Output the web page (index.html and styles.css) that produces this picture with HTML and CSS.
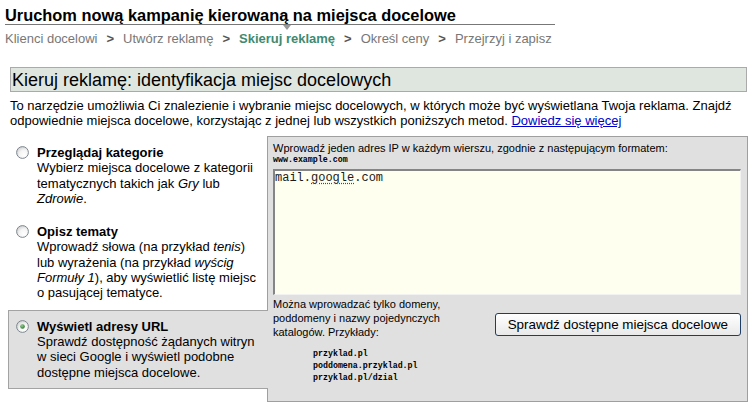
FILE: index.html
```html
<!DOCTYPE html>
<html lang="pl">
<head>
<meta charset="utf-8">
<title>Uruchom nową kampanię kierowaną na miejsca docelowe</title>
<link rel="stylesheet" href="styles.css">
</head>
<body>
<header class="top">
  <h1 class="title">Uruchom nową kampanię kierowaną na miejsca docelowe</h1>
  <nav class="crumbs"><span class="crumb">Klienci docelowi</span><span class="sep">&gt;</span><span class="crumb">Utwórz reklamę</span><span class="sep">&gt;</span><span class="crumb crumb-current">Skieruj reklamę</span><span class="sep">&gt;</span><span class="crumb">Określ ceny</span><span class="sep">&gt;</span><span class="crumb">Przejrzyj i zapisz</span></nav>
</header>
<main class="content">
  <h2 class="section-head">Kieruj reklamę: identyfikacja miejsc docelowych</h2>
  <p class="intro">To narzędzie umożliwia Ci znalezienie i wybranie miejsc docelowych, w których może być wyświetlana Twoja reklama. Znajdź odpowiednie miejsca docelowe, korzystając z jednej lub wszystkich poniższych metod. <a class="link" href="#">Dowiedz się więcej</a></p>
  <div class="picker">
    <div class="options">
      <div class="option">
        <svg class="radio" width="13" height="13" viewBox="0 0 13 13">
          <defs>
            <radialGradient id="rfill" cx="0.65" cy="0.7" r="0.75">
              <stop offset="0" stop-color="#ffffff"/>
              <stop offset="0.55" stop-color="#f4f4f4"/>
              <stop offset="1" stop-color="#cfcfcf"/>
            </radialGradient>
            <radialGradient id="rdot" cx="0.4" cy="0.35" r="0.7">
              <stop offset="0" stop-color="#8fd08f"/>
              <stop offset="1" stop-color="#2b6f2b"/>
            </radialGradient>
          </defs>
          <circle cx="6.5" cy="6.5" r="5.9" fill="url(#rfill)" stroke="#7d8790" stroke-width="1"/>
        </svg>
        <div class="opt-text">
          <div class="opt-title">Przeglądaj kategorie</div>
          <div class="opt-desc">Wybierz miejsca docelowe z kategorii tematycznych takich jak <em>Gry</em> lub <em>Zdrowie</em>.</div>
        </div>
      </div>
      <div class="option">
        <svg class="radio" width="13" height="13" viewBox="0 0 13 13">
          <circle cx="6.5" cy="6.5" r="5.9" fill="url(#rfill)" stroke="#7d8790" stroke-width="1"/>
        </svg>
        <div class="opt-text">
          <div class="opt-title">Opisz tematy</div>
          <div class="opt-desc">Wprowadź słowa (na przykład <em>tenis</em>) lub wyrażenia (na przykład <em>wyścig Formuły 1</em>), aby wyświetlić listę miejsc o pasującej tematyce.</div>
        </div>
      </div>
      <div class="option option-selected">
        <svg class="radio" width="13" height="13" viewBox="0 0 13 13">
          <circle cx="6.5" cy="6.5" r="5.9" fill="url(#rfill)" stroke="#7d8790" stroke-width="1"/>
          <circle cx="6.5" cy="6.5" r="2.3" fill="url(#rdot)"/>
        </svg>
        <div class="opt-text">
          <div class="opt-title">Wyświetl adresy URL</div>
          <div class="opt-desc">Sprawdź dostępność żądanych witryn w sieci Google i wyświetl podobne dostępne miejsca docelowe.</div>
        </div>
      </div>
    </div>
    <section class="panel">
      <div class="panel-label">Wprowadź jeden adres IP w każdym wierszu, zgodnie z następującym formatem:</div>
      <div class="format">www.example.com</div>
      <div class="field">mail.<span class="spell">google</span>.com</div>
      <div class="panel-bottom">
        <div class="hint">
          <div class="hint-text">Można wprowadzać tylko domeny, poddomeny i nazwy pojedynczych katalogów. Przykłady:</div>
          <div class="examples">
            <div>przyklad.pl</div>
            <div>poddomena.przyklad.pl</div>
            <div>przyklad.pl/dzial</div>
          </div>
        </div>
        <button class="check-btn" type="button">Sprawdź dostępne miejsca docelowe</button>
      </div>
    </section>
  </div>
</main>
</body>
</html>
```

FILE: styles.css
```css
* {
  box-sizing: border-box;
}

body {
  margin: 0;
  background: #ffffff;
  color: #000000;
  font-family: "Liberation Sans", Arial, sans-serif;
  font-size: 13px;
  line-height: 15.3px;
}

.top {
  padding-left: 5px;
}

.title {
  width: 550px;
  margin: 0;
  padding-top: 6px;
  font-size: 16.4px;
  line-height: 18px;
  font-weight: bold;
  border-bottom: 1px solid #777777;
}

.crumbs {
  margin-top: 6px;
  line-height: 15px;
  color: #777777;
  white-space: nowrap;
}

.sep {
  margin: 0 9px;
  color: #555555;
  font-weight: bold;
}

.crumb-current {
  position: relative;
  color: #3f8a70;
  font-weight: bold;
}

.crumb-current::before {
  content: "";
  position: absolute;
  left: 50%;
  top: -6px;
  margin-left: -4px;
  border-left: 4px solid transparent;
  border-right: 4px solid transparent;
  border-top: 5px solid #9a9a9a;
}

.content {
  padding: 0 6px 0 8px;
}

.section-head {
  margin: 21px 1px 0 2px;
  height: 25px;
  padding: 1px 0 0 1px;
  border: 1px solid #aaaaaa;
  background: #dfe6df;
  font-size: 18px;
  line-height: 22px;
  font-weight: normal;
}

.intro {
  margin: 6px 0 0 2px;
  line-height: 15px;
}

.link {
  color: #0000cc;
  text-decoration: underline;
}

.picker {
  display: flex;
  margin-top: 8px;
}

.options {
  flex: none;
  width: 259px;
}

.option {
  display: flex;
  align-items: flex-start;
  padding: 8px 4px 8px 7px;
  border: 1px solid transparent;
  border-right: 0;
}

.option-selected {
  position: relative;
  z-index: 1;
  margin-right: -1px;
  background: #e0e0e0;
  border-color: #a3a3a3;
}

.radio {
  flex: none;
  margin: 1px 8px 0 0;
}

.opt-text {
  flex: 1;
}

.opt-title {
  font-weight: bold;
}

.panel {
  flex: 1;
  background: #e0e0e0;
  border: 1px solid #9f9f9f;
  padding: 5px 6px 17px 5px;
  font-size: 11px;
  line-height: 13px;
}

.format {
  font-family: "Liberation Mono", "Courier New", monospace;
  font-size: 8.3px;
  line-height: 10px;
  font-weight: bold;
}

.field {
  margin-top: 4px;
  height: 126px;
  padding: 0;
  background: #fffff0;
  border-top: 2px solid #858585;
  border-left: 2px solid #858585;
  border-right: 1px solid #f2f2f2;
  border-bottom: 1px solid #f2f2f2;
  font-family: "Liberation Mono", "Courier New", monospace;
  font-size: 12px;
  line-height: 14px;
  color: #1a1a1a;
}

.spell {
  text-decoration-line: underline;
  text-decoration-style: dotted;
  text-decoration-color: #d01010;
  text-underline-offset: 2px;
}

.panel-bottom {
  display: flex;
  align-items: flex-start;
  margin-top: 2px;
}

.hint {
  width: 190px;
  flex: none;
}

.hint-text {
  line-height: 14px;
}

.examples {
  margin: 9px 0 0 40px;
  font-family: "Liberation Mono", "Courier New", monospace;
  font-size: 8.3px;
  line-height: 12px;
  font-weight: bold;
}

.check-btn {
  margin: 16px 0 0 auto;
  height: 23px;
  padding: 0 12px;
  border: 1px solid #1f3e66;
  border-radius: 3px;
  background: linear-gradient(#ffffff, #e9e9e9);
  font-family: "Liberation Sans", Arial, sans-serif;
  font-size: 13.4px;
  line-height: 19px;
  color: #000000;
  white-space: nowrap;
}
```
